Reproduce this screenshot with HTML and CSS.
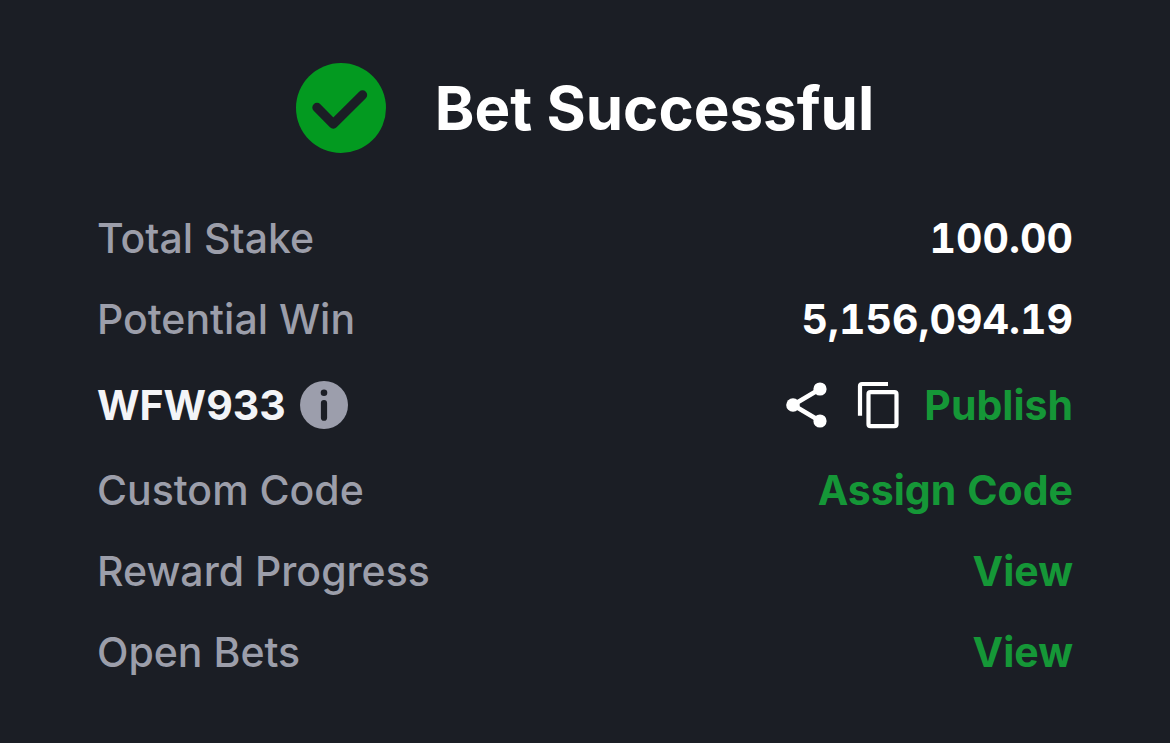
FILE: index.html
```html
<!DOCTYPE html>
<html lang="en">
<head>
<meta charset="utf-8">
<meta name="viewport" content="width=device-width, initial-scale=1">
<title>Bet Successful</title>
<link rel="stylesheet" href="styles.css">
</head>
<body>
<main class="receipt">
  <header class="header">
    <svg class="check" viewBox="0 0 90 90" aria-hidden="true">
      <circle cx="45" cy="45" r="45" fill="#039a20"/>
      <path d="M21 44.5 37.3 61 66.5 32" fill="none" stroke="#1b1e25" stroke-width="9.4" stroke-linecap="round" stroke-linejoin="round"/>
    </svg>
    <h1 class="title">Bet Successful</h1>
  </header>
  <dl class="details">
    <div class="row"><dt class="label">Total Stake</dt><dd class="value">100.00</dd></div>
    <div class="row"><dt class="label">Potential Win</dt><dd class="value">5,156,094.19</dd></div>
    <div class="row row-code">
      <dt class="code">WFW933
        <button class="icon-button" type="button" aria-label="Code information">
          <svg class="info" viewBox="0 0 48 48" aria-hidden="true"><circle cx="24" cy="24" r="24" fill="#9c9eac"/><circle cx="24" cy="11.7" r="3.3" fill="#1b1e25"/><path d="M24 22V36.7" stroke="#1b1e25" stroke-width="6.2" stroke-linecap="round"/></svg>
        </button>
      </dt>
      <dd class="value actions">
        <button class="icon-button" type="button" aria-label="Share">
          <svg class="share" viewBox="0 0 42 48" aria-hidden="true"><path d="M34 8 7 24 34 40" fill="none" stroke="#fff" stroke-width="4.6"/><g fill="#fff"><circle cx="34" cy="8" r="6.6"/><circle cx="7" cy="24" r="6.8"/><circle cx="34" cy="40" r="6.6"/></g></svg>
        </button>
        <button class="icon-button" type="button" aria-label="Copy">
          <svg class="copy" viewBox="0 0 42 48" aria-hidden="true"><path d="M3 34.7V5Q3 3 5 3H31" fill="none" stroke="#fff" stroke-width="4.2"/><rect x="11.5" y="11.2" width="28" height="34" rx="2" fill="none" stroke="#fff" stroke-width="4.2"/></svg>
        </button>
        <a class="link" href="#publish">Publish</a>
      </dd>
    </div>
    <div class="row"><dt class="label">Custom Code</dt><dd class="value"><a class="link" href="#assign">Assign Code</a></dd></div>
    <div class="row"><dt class="label">Reward Progress</dt><dd class="value"><a class="link" href="#progress">View</a></dd></div>
    <div class="row"><dt class="label">Open Bets</dt><dd class="value"><a class="link" href="#bets">View</a></dd></div>
  </dl>
</main>
</body>
</html>
```
FILE: styles.css
```css
* { box-sizing: border-box; }
body { margin: 0; background: #1b1e25; color: #fff; font-family: Inter, "Liberation Sans", sans-serif; }
.receipt { padding: 60px 97px; }
.header { display: flex; align-items: center; justify-content: center; gap: 49px; height: 96px; }
.check { width: 90px; height: 90px; }
.title { margin: 0; font-size: 60px; line-height: 72px; font-weight: 700; }
.details { margin: 58px 0 0; display: grid; gap: 33px; font-size: 41px; line-height: 48px; }
.row { display: flex; align-items: center; justify-content: space-between; min-height: 48px; }
.row-code { padding: 5px 0 4px; }
.row-code .icon-button { flex: none; }
.label { color: #9c9eaa; font-weight: 500; }
.value { margin: 0; font-weight: 700; font-variant-numeric: tabular-nums; }
.code { display: flex; align-items: center; gap: 14px; color: #f3f4f7; font-weight: 700; }
.actions { display: flex; align-items: center; }
.icon-button { display: flex; padding: 0; border: 0; background: none; cursor: pointer; }
.info { width: 48px; height: 48px; }
.share, .copy { width: 42px; height: 48px; }
.actions .icon-button { margin-right: 29px; }
.actions .icon-button + .icon-button { margin-right: 25px; }
.link { color: #159737; text-decoration: none; }
```
